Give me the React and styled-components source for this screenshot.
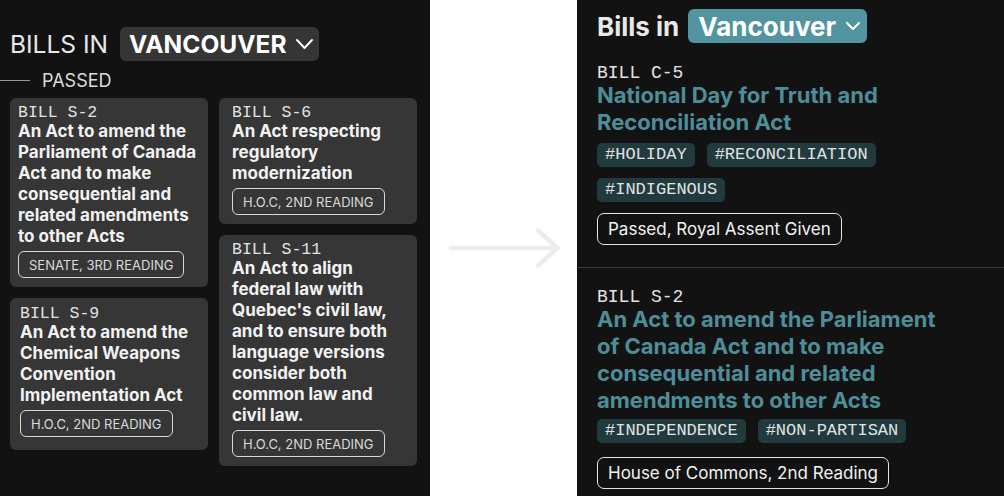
import React from 'react';
import styled, { createGlobalStyle } from 'styled-components';

const GlobalStyle = createGlobalStyle`
    body {
        margin: 0;
        background: #ffffff;
        font-family: Inter, "Noto Sans", sans-serif;
    }
`;

const Page = styled.div`
    display: flex;
    height: 496px;
    overflow: hidden;
`;

const DarkPanel = styled.div`
    background: #121212;
    color: #e8e8e8;
    height: 100%;
    box-sizing: border-box;
`;

const LeftPanel = styled(DarkPanel)`
    flex: 0 0 430px;
    padding: 27px 13px 0 10px;
`;

const RightPanel = styled(DarkPanel)`
    flex: 1;
    padding-top: 9px;
`;

const Middle = styled.div`
    flex: 0 0 147px;
    display: flex;
    align-items: center;
    justify-content: center;
`;

const Header = styled.div`
    display: flex;
    align-items: center;
    gap: ${p => p.$gap}px;
    padding: ${p => p.$pad || 0};
    font-size: ${p => p.$size}px;
    font-weight: ${p => p.$weight};
    text-transform: ${p => (p.$upper ? 'uppercase' : 'none')};
`;

const Dropdown = styled.div`
    display: flex;
    align-items: center;
    gap: 9px;
    height: 34px;
    padding: ${p => p.$pad};
    border-radius: 6px;
    background: ${p => p.$bg};
    color: #ffffff;
    font-weight: 700;
`;

const Status = styled.div`
    display: flex;
    align-items: center;
    gap: 12px;
    margin: 8px 0 7px -10px;
    height: 22px;
    font-size: 18px;
    text-transform: uppercase;
    color: #dcdcdc;
    &::before {
        content: '';
        width: 30px;
        height: 1px;
        background: #9a9a9a;
    }
`;

const Masonry = styled.div`
    display: flex;
    gap: 11px;
`;

const Column = styled.div`
    flex: 0 0 198px;
    display: flex;
    flex-direction: column;
    gap: 11px;
`;

const Card = styled.div`
    background: #363636;
    border-radius: 6px;
    padding: ${p => p.$pad};
`;

const BillNo = styled.div`
    font-family: "Liberation Mono", "Courier New", monospace;
    font-size: ${p => p.$size}px;
    line-height: 18px;
    height: ${p => p.$h}px;
    color: #e2e2e2;
`;

const CardTitle = styled.div`
    font-size: 17px;
    font-weight: 700;
    line-height: 21px;
    color: #f2f2f2;
`;

const Reading = styled.div`
    display: inline-flex;
    align-items: center;
    margin-top: 4px;
    height: 25px;
    padding: 0 10px;
    border: 1px solid #d8d8d8;
    border-radius: 6px;
    font-size: 13px;
    text-transform: uppercase;
    color: #dadada;
`;

const Section = styled.div`
    padding: ${p => p.$pad};
    border-bottom: ${p => (p.$divider ? '1px solid #3a3a3a' : 'none')};
`;

const Title = styled.div`
    max-width: 355px;
    font-size: 22px;
    font-weight: 700;
    line-height: 27px;
    color: #4d8e98;
`;

const Tags = styled.div`
    display: flex;
    flex-wrap: wrap;
    gap: 11px 12px;
    margin-top: ${p => p.$top}px;
`;

const Tag = styled.span`
    height: 24px;
    line-height: 24px;
    padding: 0 8px;
    border-radius: 5px;
    background: #203a3e;
    font-family: "Liberation Mono", "Courier New", monospace;
    font-size: 17px;
    color: #e2e2e2;
`;

const Pill = styled.div`
    display: inline-flex;
    align-items: center;
    margin-top: ${p => p.$top}px;
    height: 30px;
    padding: 0 10px;
    border: 1px solid #e6e6e6;
    border-radius: 7px;
    font-size: 17px;
    color: #f2f2f2;
`;

const columns = [
    [
        { no: 'S-2', pad: '6px 7px 9px 8px', title: 'An Act to amend the Parliament of Canada Act and to make consequential and related amendments to other Acts', stage: 'Senate, 3rd Reading' },
        { no: 'S-9', pad: '7px 9px 13px 10px', title: 'An Act to amend the Chemical Weapons Convention Implementation Act', stage: 'H.O.C, 2nd Reading' },
    ],
    [
        { no: 'S-6', pad: '6px 12px 9px 13px', title: 'An Act respecting regulatory modernization', stage: 'H.O.C, 2nd Reading' },
        { no: 'S-11', pad: '6px 12px 9px 13px', title: "An Act to align federal law with Quebec's civil law, and to ensure both language versions consider both common law and civil law.", stage: 'H.O.C, 2nd Reading' },
    ],
];

const featured = [
    {
        no: 'C-5',
        title: 'National Day for Truth and Reconciliation Act',
        tags: ['HOLIDAY', 'RECONCILIATION', 'INDIGENOUS'],
        status: 'Passed, Royal Assent Given',
        pad: '21px 20px 22px',
        tagTop: 7,
        pillTop: 11,
    },
    {
        no: 'S-2',
        title: 'An Act to amend the Parliament of Canada Act and to make consequential and related amendments to other Acts',
        tags: ['INDEPENDENCE', 'NON-PARTISAN'],
        status: 'House of Commons, 2nd Reading',
        pad: '20px 20px 0',
        tagTop: 5,
        pillTop: 14,
    },
];

function Chevron({ w, h }) {
    return (
        <svg width={w + 4} height={h + 4} viewBox={`0 0 ${w + 4} ${h + 4}`} fill="none" stroke="currentColor" strokeWidth="2" strokeLinecap="round" strokeLinejoin="round">
            <polyline points={`2,2 ${w / 2 + 2},${h + 2} ${w + 2},2`} />
        </svg>
    );
}

function Arrow() {
    return (
        <svg width="112" height="40" viewBox="0 0 112 40" fill="none" stroke="#ececec" strokeWidth="4.5" strokeLinecap="round" strokeLinejoin="round">
            <line x1="2.5" y1="20" x2="109" y2="20" />
            <polyline points="90,2.5 109.5,20 90,37.5" />
        </svg>
    );
}

export default function App() {
    return (
        <Page>
            <GlobalStyle />
            <LeftPanel>
                <Header $gap={12} $size={24.5} $weight={400} $upper>
                    <span>Bills in</span>
                    <Dropdown $bg="#353535" $pad="0 5px 0 9px">
                        <span>Vancouver</span>
                        <Chevron w={15} h={8} />
                    </Dropdown>
                </Header>
                <Status>Passed</Status>
                <Masonry>
                    {columns.map((col, i) => (
                        <Column key={i}>
                            {col.map(bill => (
                                <Card key={bill.no} $pad={bill.pad}>
                                    <BillNo $size={16.5} $h={17}>BILL {bill.no}</BillNo>
                                    <CardTitle>{bill.title}</CardTitle>
                                    <Reading>{bill.stage}</Reading>
                                </Card>
                            ))}
                        </Column>
                    ))}
                </Masonry>
            </LeftPanel>
            <Middle>
                <Arrow />
            </Middle>
            <RightPanel>
                <Header $gap={9} $size={26} $weight={700} $pad="0 20px">
                    <span>Bills in</span>
                    <Dropdown $bg="#5295a0" $pad="0 6px 0 10px">
                        <span>Vancouver</span>
                        <Chevron w={12} h={6} />
                    </Dropdown>
                </Header>
                {featured.map((bill, i) => (
                    <Section key={bill.no} $pad={bill.pad} $divider={i === 0}>
                        <BillNo $size={18} $h={18}>BILL {bill.no}</BillNo>
                        <Title>{bill.title}</Title>
                        <Tags $top={bill.tagTop}>
                            {bill.tags.map(t => <Tag key={t}>#{t}</Tag>)}
                        </Tags>
                        <Pill $top={bill.pillTop}>{bill.status}</Pill>
                    </Section>
                ))}
            </RightPanel>
        </Page>
    );
}
